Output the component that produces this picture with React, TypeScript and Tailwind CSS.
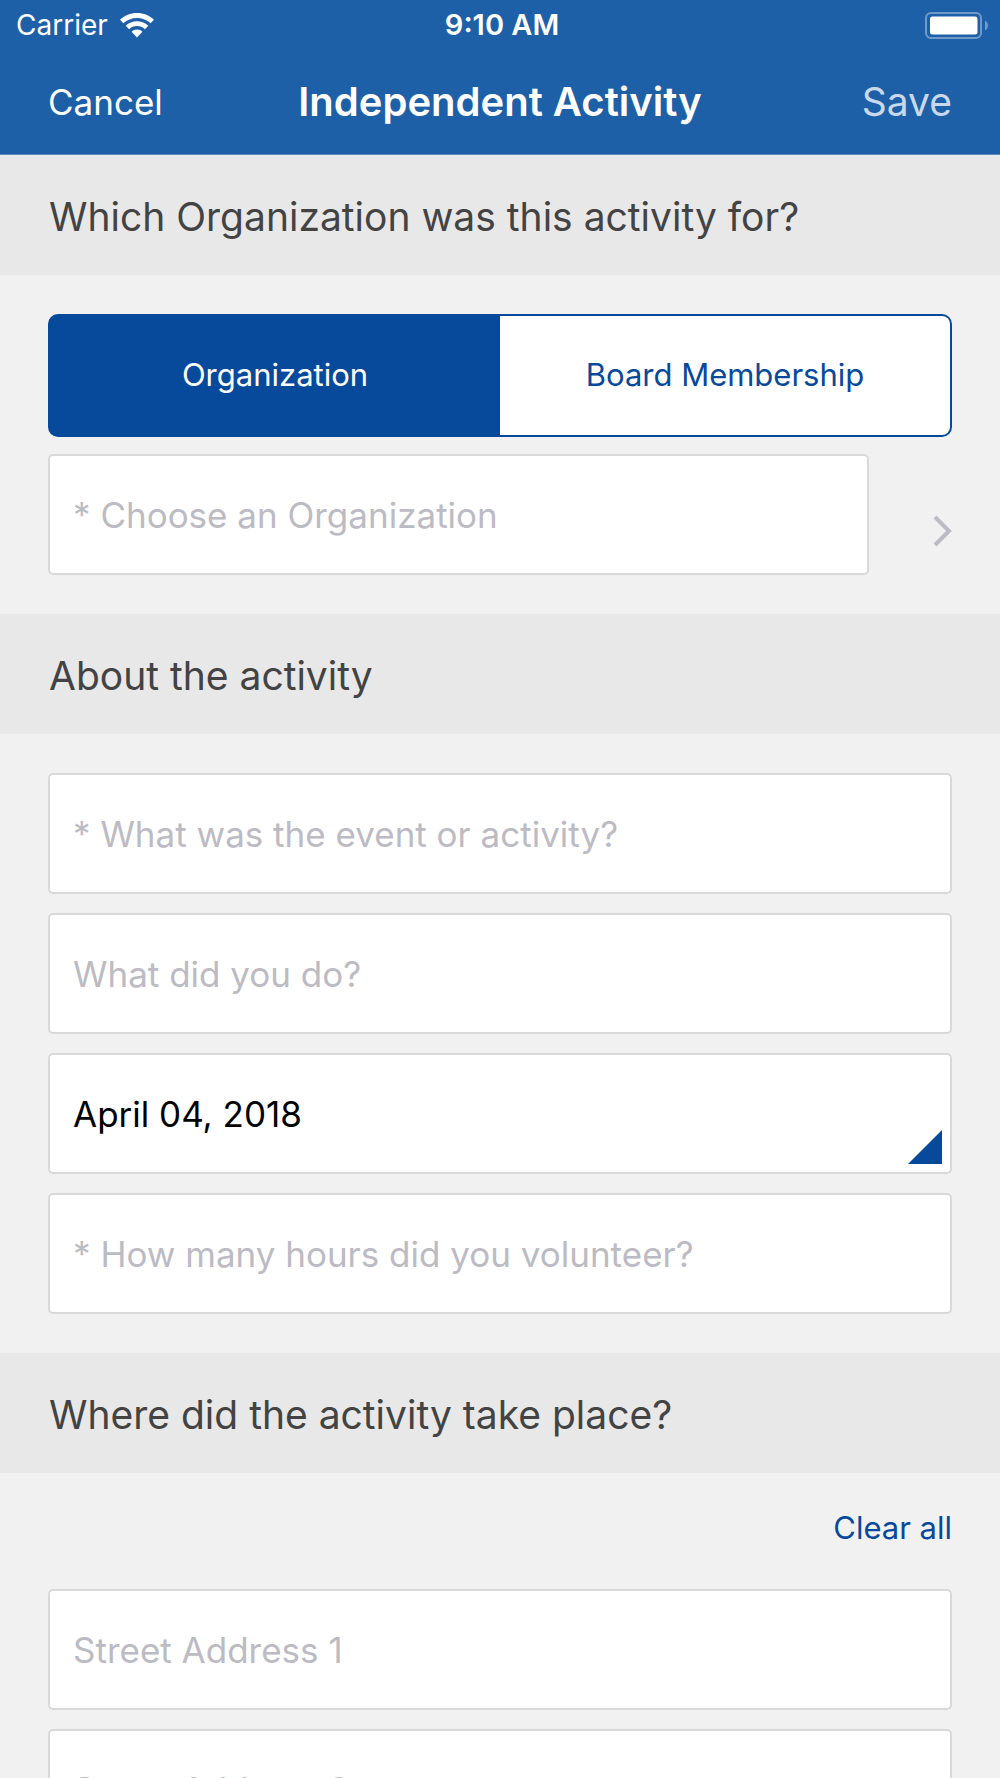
import { useState, type ReactNode } from "react";
import clsx from "clsx";

function WifiIcon() {
  return (
    <svg width="34" height="25" viewBox="0 0 34 25" fill="currentColor" aria-hidden="true">
      <path d="M17 0C10.400 0 4.400 2.500 0 6.700L3.400 10.300C7 6.900 11.800 4.900 17 4.900S27 6.900 30.600 10.300L34 6.700C29.600 2.500 23.600 0 17 0Z" />
      <path d="M17 8.300C12.700 8.300 8.700 9.900 5.700 12.700L9.100 16.200C11.200 14.300 14 13.100 17 13.100S22.800 14.300 24.900 16.200L28.300 12.700C25.300 9.900 21.300 8.300 17 8.300Z" />
      <path d="M17 16.500C14.900 16.500 13 17.300 11.600 18.700L17 24.500L22.400 18.700C21 17.300 19.100 16.500 17 16.500Z" />
    </svg>
  );
}

function BatteryIcon() {
  return (
    <svg width="63" height="27" viewBox="0 0 63 27" aria-hidden="true">
      <rect x="1" y="1" width="55" height="25" rx="5" fill="none" stroke="#6f9bca" strokeWidth="2" />
      <rect x="5" y="4.500" width="47.500" height="18" rx="2.500" fill="#ffffff" />
      <path d="M60 8.500C61.800 9.500 63 11.300 63 13.500S61.800 17.500 60 18.500Z" fill="#6f9bca" />
    </svg>
  );
}

function SectionTitle({ children }: { children: ReactNode }) {
  return (
    <h2 className="flex h-[120px] items-center bg-[#e8e8e8] px-[49px] pt-[3px] text-[39px] leading-[48px] text-[#434343]">
      {children}
    </h2>
  );
}

type FieldProps = {
  name: string;
  placeholder: string;
  defaultValue?: string;
};

function Field({ name, placeholder, defaultValue }: FieldProps) {
  return (
    <input
      type="text"
      name={name}
      aria-label={placeholder}
      placeholder={placeholder}
      defaultValue={defaultValue}
      className="block h-[121px] w-full min-w-0 rounded-[5px] border-2 border-[#d9d9d9] bg-white px-[23px] text-[35px] text-black placeholder:text-[#bcbbc3] focus:outline-none"
    />
  );
}

const activityTypes = ["Organization", "Board Membership"];

export default function App() {
  const [activityType, setActivityType] = useState("Organization");

  return (
    <div className="flex h-screen flex-col bg-[#f1f1f1] font-[Inter,sans-serif]">
      <header className="shrink-0 border-b border-[#5b8bc0] bg-[#1e60a8] text-white">
        <div className="grid h-[50px] grid-cols-[1fr_auto_1fr] items-center pr-3 pl-4 text-[28px] leading-[34px]">
          <div className="flex items-center gap-3">
            <span>Carrier</span>
            <WifiIcon />
          </div>
          <span className="text-[29px] font-semibold">9:10 AM</span>
          <div className="flex justify-end">
            <BatteryIcon />
          </div>
        </div>
        <div className="grid h-[104px] grid-cols-[1fr_auto_1fr] items-center px-12">
          <button type="button" className="justify-self-start text-[35px]">
            Cancel
          </button>
          <h1 className="text-[40px] font-semibold">Independent Activity</h1>
          <button type="button" className="justify-self-end text-[39px] text-[#c9d8ea]">
            Save
          </button>
        </div>
      </header>

      <main className="min-h-0 flex-1 overflow-y-auto [scrollbar-width:none]">
        <SectionTitle>Which Organization was this activity for?</SectionTitle>
        <div className="px-12 py-[39px]">
          <div className="mb-[17px] flex h-[123px] overflow-hidden rounded-[10px] border-2 border-[#07499b] bg-[#07499b]">
            {activityTypes.map((type) => (
              <button
                key={type}
                type="button"
                aria-pressed={activityType === type}
                onClick={() => setActivityType(type)}
                className={clsx(
                  "flex-1 text-[31px]",
                  activityType === type ? "bg-[#07499b] text-white" : "bg-white text-[#07499b]"
                )}
              >
                {type}
              </button>
            ))}
          </div>
          <div className="flex items-center gap-16">
            <Field name="organization" placeholder="* Choose an Organization" />
            <button type="button" aria-label="Choose an Organization" className="pt-8 text-[#bcbbc3]">
              <svg width="19" height="32" viewBox="0 0 19 32" fill="none" stroke="currentColor" strokeWidth="4">
                <path d="M2 2L16 16L2 30" />
              </svg>
            </button>
          </div>
        </div>

        <SectionTitle>About the activity</SectionTitle>
        <div className="flex flex-col gap-[19px] px-12 py-[39px]">
          <Field name="event" placeholder="* What was the event or activity?" />
          <Field name="description" placeholder="What did you do?" />
          <div className="relative">
            <Field name="date" placeholder="Date" defaultValue="April 04, 2018" />
            <svg
              className="pointer-events-none absolute right-[10px] bottom-[10px]"
              width="34"
              height="34"
              viewBox="0 0 34 34"
              fill="#07499b"
              aria-hidden="true"
            >
              <path d="M34 0V34H0Z" />
            </svg>
          </div>
          <Field name="hours" placeholder="* How many hours did you volunteer?" />
        </div>

        <SectionTitle>Where did the activity take place?</SectionTitle>
        <div className="flex flex-col gap-[19px] px-12 pt-8 pb-[39px]">
          <button type="button" className="mb-5 self-end text-[31px] leading-[45px] text-[#07499b]">
            Clear all
          </button>
          <Field name="street1" placeholder="Street Address 1" />
          <Field name="street2" placeholder="Street Address 2" />
        </div>
      </main>
    </div>
  );
}
